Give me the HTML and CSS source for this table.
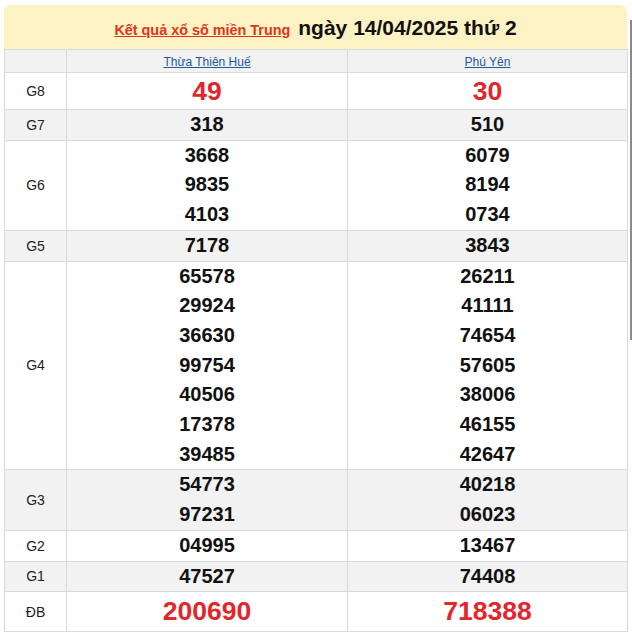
FILE: index.html
```html
<!DOCTYPE html>
<html lang="vi">
<head>
<meta charset="utf-8">
<title>Kết quả xổ số miền Trung</title>
<link rel="stylesheet" href="styles.css">
</head>
<body>
<div class="box">
  <div class="title">
    <a class="link" href="#">Kết quả xổ số miền Trung</a>
    <span class="date">ngày 14/04/2025 thứ 2</span>
  </div>
  <table class="kq">
    <colgroup><col class="c1"><col class="c2"><col class="c3"></colgroup>
    <tr class="head alt">
      <td></td>
      <td><a href="#" class="prov">Thừa Thiên Huế</a></td>
      <td><a href="#" class="prov">Phú Yên</a></td>
    </tr>
    <tr class="g8">
      <td class="lbl">G8</td>
      <td><div class="n big">49</div></td>
      <td><div class="n big">30</div></td>
    </tr>
    <tr class="alt">
      <td class="lbl">G7</td>
      <td><div class="n">318</div></td>
      <td><div class="n">510</div></td>
    </tr>
    <tr>
      <td class="lbl">G6</td>
      <td><div class="n">3668</div><div class="n">9835</div><div class="n">4103</div></td>
      <td><div class="n">6079</div><div class="n">8194</div><div class="n">0734</div></td>
    </tr>
    <tr class="alt">
      <td class="lbl">G5</td>
      <td><div class="n">7178</div></td>
      <td><div class="n">3843</div></td>
    </tr>
    <tr>
      <td class="lbl">G4</td>
      <td><div class="n">65578</div><div class="n">29924</div><div class="n">36630</div><div class="n">99754</div><div class="n">40506</div><div class="n">17378</div><div class="n">39485</div></td>
      <td><div class="n">26211</div><div class="n">41111</div><div class="n">74654</div><div class="n">57605</div><div class="n">38006</div><div class="n">46155</div><div class="n">42647</div></td>
    </tr>
    <tr class="alt">
      <td class="lbl">G3</td>
      <td><div class="n">54773</div><div class="n">97231</div></td>
      <td><div class="n">40218</div><div class="n">06023</div></td>
    </tr>
    <tr>
      <td class="lbl">G2</td>
      <td><div class="n">04995</div></td>
      <td><div class="n">13467</div></td>
    </tr>
    <tr class="alt">
      <td class="lbl">G1</td>
      <td><div class="n">47527</div></td>
      <td><div class="n">74408</div></td>
    </tr>
    <tr>
      <td class="lbl">ĐB</td>
      <td><div class="n db">200690</div></td>
      <td><div class="n db">718388</div></td>
    </tr>
  </table>
</div>
<div class="scrollthumb"></div>
</body>
</html>
```

FILE: styles.css
```css
html, body {
  margin: 0;
  padding: 0;
  background: #ffffff;
}
body {
  font-family: "Liberation Sans", Arial, sans-serif;
  padding: 5px 0 0 4px;
  position: relative;
  height: 640px;
  box-sizing: border-box;
  overflow: hidden;
}
.box {
  width: 623px;
  background: #fffdf2;
}
.title {
  height: 44px;
  background: #fdf2c4;
  border-radius: 6px 8px 0 0;
  display: flex;
  align-items: center;
  justify-content: center;
  gap: 8px;
  padding-top: 1px;
  box-sizing: border-box;
}
.link {
  color: #e2341a;
  font-weight: bold;
  font-size: 14.4px;
  text-decoration: underline;
  position: relative;
  top: 2px;
}
.date {
  color: #111;
  font-weight: bold;
  font-size: 21px;
}
.kq {
  width: 623px;
  border-collapse: collapse;
  table-layout: fixed;
  background: #fff;
}
.c1 { width: 62px; }
.c2 { width: 281px; }
.c3 { width: 280px; }
.kq td {
  border: 1px solid #d9d9d9;
  text-align: center;
  vertical-align: middle;
  padding: 0;
}
.kq tr.alt td {
  background: #f2f2f2;
}
.head td {
  height: 22px;
}
.prov {
  color: #1d5a9a;
  font-size: 12px;
  text-decoration: underline;
}
.lbl {
  font-size: 14px;
  color: #222;
}
.n {
  font-size: 20px;
  font-weight: bold;
  color: #111;
  line-height: 29.7px;
}
.n.big {
  font-size: 26.5px;
  line-height: 36px;
  color: #e3262c;
}
.n.db {
  font-size: 26.5px;
  line-height: 39px;
  color: #e3262c;
}
.scrollthumb {
  position: absolute;
  left: 630px;
  top: 20px;
  width: 2px;
  height: 320px;
  background: #8a8a8a;
}
```
